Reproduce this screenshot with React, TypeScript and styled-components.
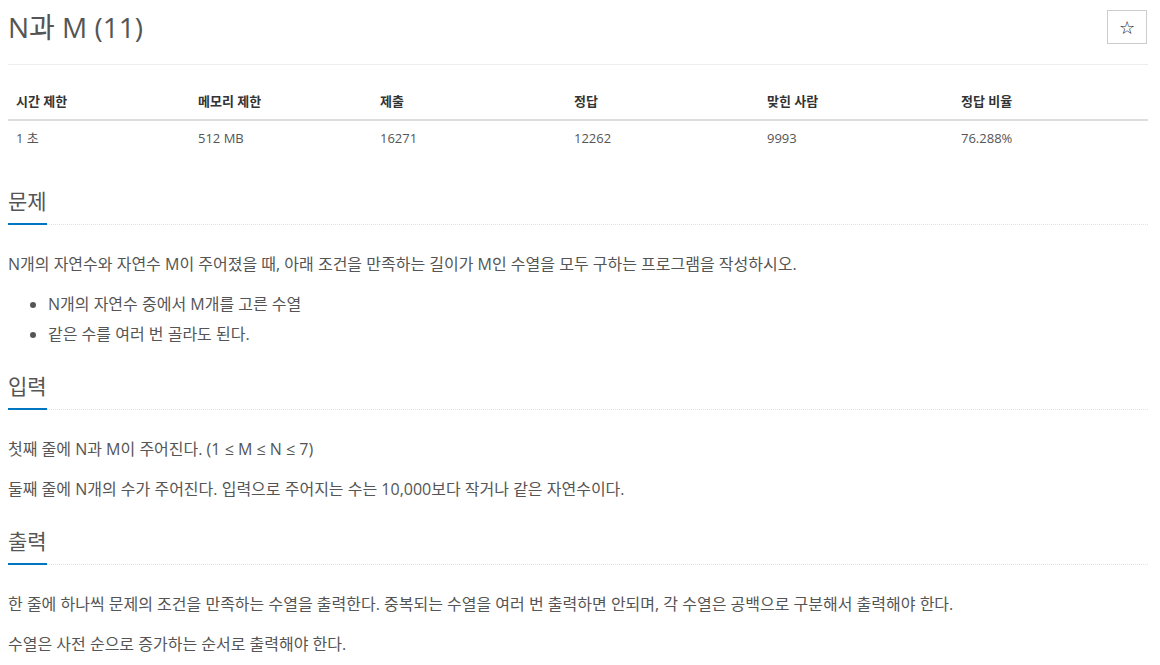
import React from "react";
import styled, { createGlobalStyle } from "styled-components";

const GlobalStyle = createGlobalStyle`
  html, body {
    margin: 0;
    padding: 0;
    background: #fff;
  }
  body {
    font-family: "Open Sans", "Noto Sans CJK KR", sans-serif;
    color: #555;
  }
`;

const Container = styled.div`
  width: 1140px;
  padding: 0 8px;
`;

const PageHeader = styled.div`
  display: flex;
  align-items: center;
  justify-content: space-between;
  padding: 10px 0 20px;
  border-bottom: 1px solid #eee;
`;

const Title = styled.h1`
  margin: 0;
  font-size: 28px;
  font-weight: 400;
  line-height: 34px;
  color: #555;
`;

const StarButton = styled.button`
  width: 40px;
  height: 34px;
  border: 1px solid #ccc;
  background: #fff;
  color: #111;
  font-size: 18px;
  font-family: "DejaVu Sans", sans-serif;
  padding: 0;
  margin-right: 1px;
  display: flex;
  align-items: center;
  justify-content: center;
`;

const InfoTable = styled.table`
  width: 100%;
  margin-top: 18px;
  border-collapse: collapse;
  table-layout: fixed;
  font-size: 13px;
`;

const Th = styled.th<{ $w: number }>`
  box-sizing: border-box;
  width: ${(p) => p.$w}px;
  text-align: left;
  padding: 8px 8px;
  line-height: 20px;
  font-weight: 700;
  color: #333;
  border-bottom: 2px solid #ddd;
`;

const Td = styled.td`
  padding: 7px 8px 8px;
  line-height: 20px;
  color: #555;
`;

const Section = styled.section<{ $first?: boolean }>`
  margin-top: ${(p) => (p.$first ? 30 : 22)}px;
`;

const Headline = styled.div`
  display: flex;
  border-bottom: 1px dotted #dfe3e8;
`;

const H2 = styled.h2`
  margin: 0 0 -1px;
  font-size: 21px;
  font-weight: 400;
  line-height: 30px;
  padding-bottom: 7px;
  color: #555;
  border-bottom: 2px solid #0076c0;
`;

const Body = styled.div`
  margin-top: 24px;
  font-size: 16px;
  line-height: 30px;
  color: #555;
`;

const P = styled.p`
  margin: 0 0 10px;
`;

const List = styled.ul`
  margin: 0 0 10px;
  padding-left: 40px;
`;

const Item = styled.li``;

const columns = [
  { label: "시간 제한", value: "1 초", w: 182 },
  { label: "메모리 제한", value: "512 MB", w: 182 },
  { label: "제출", value: "16271", w: 194 },
  { label: "정답", value: "12262", w: 193 },
  { label: "맞힌 사람", value: "9993", w: 194 },
  { label: "정답 비율", value: "76.288%", w: 195 },
];

const App: React.FC = () => (
  <Container>
    <GlobalStyle />
    <PageHeader>
      <Title>N과 M (11)</Title>
      <StarButton>☆</StarButton>
    </PageHeader>
    <InfoTable>
      <thead>
        <tr>
          {columns.map((c) => (
            <Th key={c.label} $w={c.w}>
              {c.label}
            </Th>
          ))}
        </tr>
      </thead>
      <tbody>
        <tr>
          {columns.map((c) => (
            <Td key={c.label}>{c.value}</Td>
          ))}
        </tr>
      </tbody>
    </InfoTable>

    <Section $first>
      <Headline>
        <H2>문제</H2>
      </Headline>
      <Body>
        <P>
          N개의 자연수와 자연수 M이 주어졌을 때, 아래 조건을 만족하는 길이가 M인 수열을 모두 구하는
          프로그램을 작성하시오.
        </P>
        <List>
          <Item>N개의 자연수 중에서 M개를 고른 수열</Item>
          <Item>같은 수를 여러 번 골라도 된다.</Item>
        </List>
      </Body>
    </Section>

    <Section>
      <Headline>
        <H2>입력</H2>
      </Headline>
      <Body>
        <P>첫째 줄에 N과 M이 주어진다. (1 ≤ M ≤ N ≤ 7)</P>
        <P>둘째 줄에 N개의 수가 주어진다. 입력으로 주어지는 수는 10,000보다 작거나 같은 자연수이다.</P>
      </Body>
    </Section>

    <Section>
      <Headline>
        <H2>출력</H2>
      </Headline>
      <Body>
        <P>
          한 줄에 하나씩 문제의 조건을 만족하는 수열을 출력한다. 중복되는 수열을 여러 번 출력하면
          안되며, 각 수열은 공백으로 구분해서 출력해야 한다.
        </P>
        <P>수열은 사전 순으로 증가하는 순서로 출력해야 한다.</P>
      </Body>
    </Section>
  </Container>
);

export default App;
